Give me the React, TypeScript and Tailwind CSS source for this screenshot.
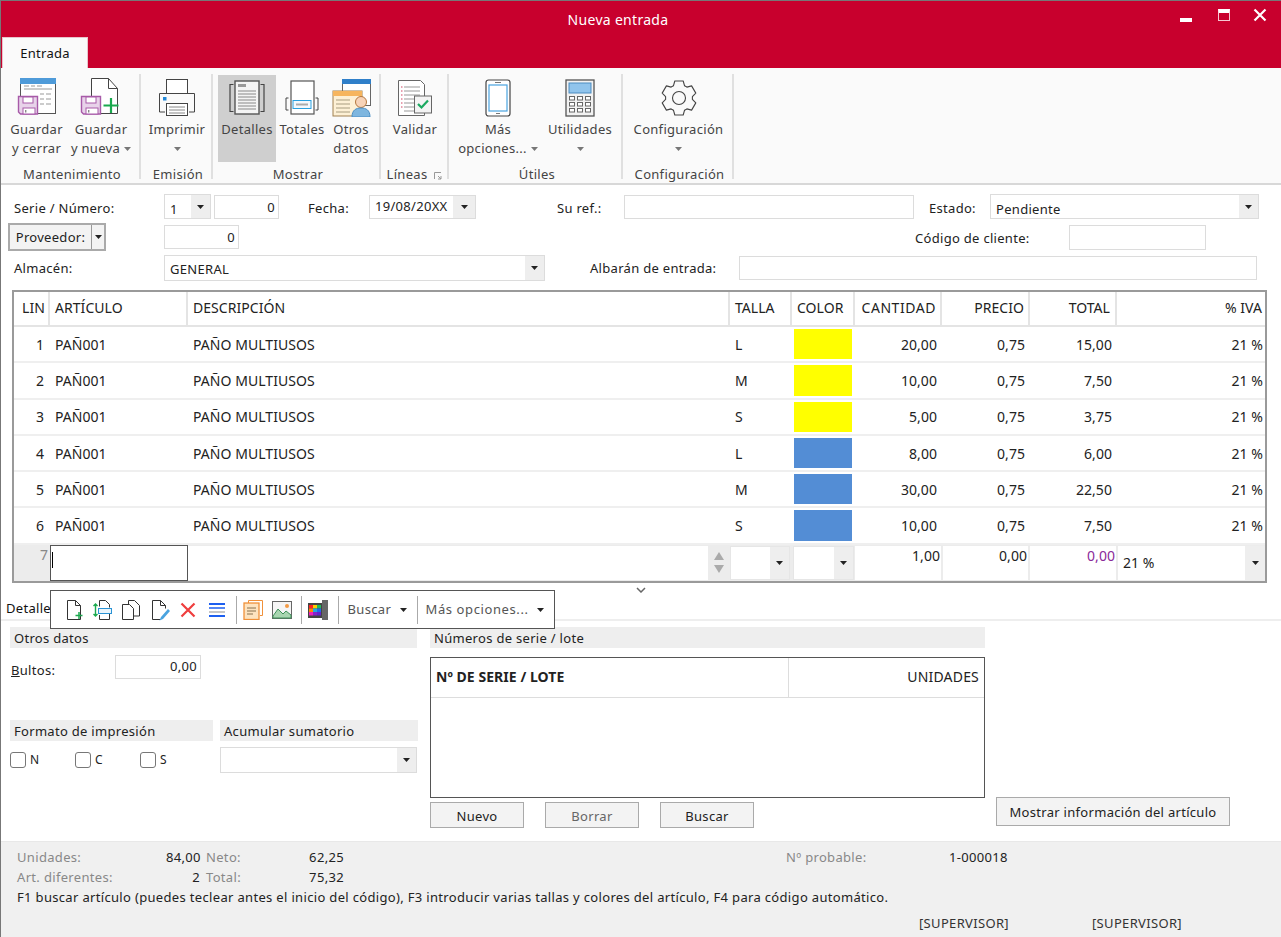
import React from "react";

const Caret = ({ className = "" }: { className?: string }) => (
  <svg width="7" height="4" viewBox="0 0 7 4" className={className}><path d="M0 0h7L3.5 4z" fill="currentColor" /></svg>
);

const Guardar = ({ x = 0 }: { x?: number }) => (
  <g transform={`translate(${x} 0)`}>
    <path d="M1.500 19.500h19v17.500h-17l-2-2z" fill="#e8d3ea" stroke="#a75aa8" strokeWidth="1.400" />
    <rect x="6" y="20" width="10" height="6" fill="#fff" stroke="#a75aa8" />
    <rect x="6" y="31" width="12" height="6" fill="#fff" stroke="#a75aa8" />
    <rect x="8" y="33" width="1.400" height="2.500" fill="#888" />
  </g>
);

const IconGuardarCerrar = () => (
  <svg width="42" height="42" viewBox="0 0 42 42">
    <rect x="4.500" y="1.500" width="35" height="35" fill="#fff" stroke="#555" />
    <rect x="4" y="1" width="36" height="6" fill="#4f9bd9" />
    <path d="M8 9h5M15 9h4M21 9h5M8 12h28M24 17h4M30 17h5M24 22h4M30 22h5M24 27h4M30 27h5" stroke="#999" strokeWidth="1" />
    <Guardar x={1} />
  </svg>
);
const IconGuardarNueva = () => (
  <svg width="42" height="42" viewBox="0 0 42 42">
    <path d="M11.500 1.500h17l9 10v25h-26z" fill="#fff" stroke="#444" />
    <path d="M28.500 1.500v10h9" fill="none" stroke="#444" />
    <Guardar x={0} />
    <path d="M31 21v15M23.500 28.500h15" stroke="#1aa94e" strokeWidth="2.200" />
  </svg>
);
const IconPrint = () => (
  <svg width="40" height="40" viewBox="0 0 40 40">
    <rect x="9.500" y="1.500" width="21" height="14" fill="#fff" stroke="#444" />
    <path d="M8 34H2.500V15.500h35V34H32" fill="#fafafa" stroke="#444" />
    <rect x="6" y="19" width="3.500" height="3.500" fill="#2288d8" />
    <rect x="9.500" y="25.500" width="21" height="12" fill="#fff" stroke="#444" />
    <path d="M12 29h16M12 32h16M12 35h16" stroke="#888" />
  </svg>
);
const IconDetalles = () => (
  <svg width="38" height="36" viewBox="0 0 38 36">
    <path d="M5.500 4.500H2v27h3.500M32.500 4.500H36v27h-3.500" fill="none" stroke="#444" strokeWidth="1.200" />
    <rect x="7" y="1" width="24" height="33" fill="#f4f4f4" stroke="#555" strokeWidth="1.400" />
    <rect x="10" y="4" width="8" height="3" fill="#999" />
    <path d="M10 11h18M10 14h18M10 17h18M10 20h18M10 23h18M10 26h18M10 29h18" stroke="#888" />
  </svg>
);
const IconTotales = () => (
  <svg width="34" height="36" viewBox="0 0 34 36">
    <rect x="6" y="1" width="23" height="33" fill="#fff" stroke="#555" strokeWidth="1.200" />
    <path d="M3.500 18H1v12h2.500M30.500 18H33v12h-2.500" fill="none" stroke="#444" />
    <rect x="8" y="20.500" width="18" height="8" fill="#f2f8fd" stroke="#28a0e0" />
    <path d="M11 24.500h12" stroke="#aaa" strokeWidth="2" />
  </svg>
);
const IconOtros = () => (
  <svg width="39" height="38" viewBox="0 0 39 38">
    <rect x="10.500" y="0.500" width="28" height="26" fill="#fff" stroke="#666" />
    <rect x="10" y="0" width="29" height="5" fill="#2f7fc9" />
    <rect x="1" y="12" width="29" height="25" fill="#fdf0d5" stroke="#a08050" />
    <rect x="1" y="12" width="29" height="5" fill="#f6b55e" />
    <path d="M4 21h14M4 25h14M4 29h14M4 33h14" stroke="#a89d80" />
    <circle cx="29" cy="23" r="5.500" fill="#f7d3b8" stroke="#b5763c" />
    <path d="M20 38c0-7 4-9 9-9s9 2 9 9z" fill="#7eb6df" stroke="#4d8fc4" />
  </svg>
);
const IconValidar = () => (
  <svg width="36" height="38" viewBox="0 0 36 38">
    <path d="M1.500 1.500h22l4 4v31h-26z" fill="#fff" stroke="#666" />
    <path d="M7 8h16M7 12h16M7 16h16M7 20h10M7 24h10M7 28h10M7 32h10" stroke="#999" />
    <path d="M4 8h1.500M4 12h1.500M4 16h1.500M4 20h1.500M4 24h1.500M4 28h1.500" stroke="#d04060" />
    <rect x="17.500" y="17" width="17" height="17" fill="#f4f4f4" stroke="#666" />
    <path d="M21 25l3.500 3.500 6.500-7" fill="none" stroke="#1aa960" strokeWidth="2.200" />
  </svg>
);
const IconTablet = () => (
  <svg width="26" height="38" viewBox="0 0 26 38">
    <rect x="1" y="1" width="24" height="36" rx="2.500" fill="#fff" stroke="#444" strokeWidth="1.200" />
    <rect x="4" y="6" width="18" height="26" fill="#fff" stroke="#4aa3df" strokeWidth="1.200" />
    <path d="M10 3.500h6M11 34.500h4" stroke="#777" />
  </svg>
);
const IconCalc = () => (
  <svg width="30" height="38" viewBox="0 0 30 38">
    <rect x="1" y="1" width="28" height="36" fill="#f2f2f2" stroke="#555" strokeWidth="1.300" />
    <rect x="4" y="4" width="22" height="10" fill="#90c4ec" stroke="#4b8bc0" />
    {[18, 24, 30].map((y) =>
      [4.5, 12.5, 20.5].map((x) => <rect key={`${x}-${y}`} x={x} y={y - 0.5} width="5" height="3.500" fill="#fff" stroke="#666" />)
    )}
  </svg>
);

const gearPath = (() => {
  const pts: string[] = [];
  const R = 17.5, r = 13.5, c = 18;
  for (let i = 0; i < 6; i++) {
    const a = (i * Math.PI) / 3 - Math.PI / 2;
    const seq: [number, number][] = [[r, a - 0.42], [R, a - 0.24], [R, a + 0.24], [r, a + 0.42]];
    seq.forEach(([rad, ang]) => pts.push(`${(c + rad * Math.cos(ang)).toFixed(1)} ${(c + rad * Math.sin(ang)).toFixed(1)}`));
  }
  return "M" + pts.join("L") + "Z";
})();
const IconGear = () => (
  <svg width="36" height="36" viewBox="0 0 36 36" fill="none" stroke="#444" strokeWidth="1.100" strokeLinejoin="round">
    <path d={gearPath} />
    <circle cx="18" cy="18" r="6.500" />
  </svg>
);

const RibbonBtn = ({ icon, l1, l2, caret, w, active }: any) => (
  <div className={`flex flex-col items-center h-[87px] pt-[1px] mt-[1px] shrink-0 ${w} ${active ? "bg-[#cfcfcf]" : ""}`}>
    <div className="h-[44px] flex items-center justify-center">{icon}</div>
    <div className="h-[19px] leading-[19px] whitespace-nowrap">{l1}</div>
    <div className="h-[19px] leading-[19px] whitespace-nowrap flex items-center gap-[4px]">
      {l2}
      {caret && <Caret className="text-[#777]" />}
    </div>
  </div>
);

const Group = ({ label, w, children, launcher, pl = "" }: any) => (
  <div className={`flex flex-col border-r-2 border-[#e0e0e0] h-[105px] shrink-0 ${w}`}>
    <div className={`flex h-[89px] shrink-0 ${pl}`}>{children}</div>
    <div className={`relative text-center leading-[19px] h-[19px] mt-[2px] shrink-0 whitespace-nowrap ${launcher ? "pr-[14px]" : "pl-[4px]"}`}>
      {label}
      {launcher && (
        <svg width="8" height="8" viewBox="0 0 8 8" className="absolute right-[5px] top-[7px]">
          <path d="M.5 7V.5H7M4 4l3 3M7 4v3H4" fill="none" stroke="#999" />
        </svg>
      )}
    </div>
  </div>
);

const Field = ({ w, h = "h-[24px]", ml = "", v = "", lh = "leading-[22px]" }: any) => (
  <div className={`shrink-0 border border-[#dcdcdc] bg-white text-right pr-[3px] ${lh} ${w} ${h} ${ml}`}>{v}</div>
);
const Select = ({ w, h = "h-[25px]", ml = "", v = "", arrow = "w-[19px]", lh = "leading-[28px]" }: any) => (
  <div className={`shrink-0 flex border border-[#dcdcdc] bg-white ${w} ${h} ${ml}`}>
    <div className={`flex-1 pl-[5px] truncate ${lh}`}>{v}</div>
    <div className={`flex items-center justify-center bg-[#eeeeee] text-[#222] ${arrow}`}><Caret /></div>
  </div>
);

const cols = ["w-[36px]", "w-[138px]", "w-[542px]", "w-[62px]", "w-[63px]", "w-[87px]", "w-[88px]", "w-[87px]", "flex-1"];
const rows = [
  ["1", "L", "#ffff00", "20,00", "15,00"],
  ["2", "M", "#ffff00", "10,00", "7,50"],
  ["3", "S", "#ffff00", "5,00", "3,75"],
  ["4", "L", "#538dd5", "8,00", "6,00"],
  ["5", "M", "#538dd5", "30,00", "22,50"],
  ["6", "S", "#538dd5", "10,00", "7,50"],
];

const Head = ({ c, t, px = "px-[5px]", right, wide }: any) => (
  <div className={`${c} shrink-0 h-full border-r-2 border-[#e4e4e4] last:border-r-0 ${px} pb-[2px] flex items-center whitespace-nowrap ${right ? "justify-end" : ""} ${wide ? "tracking-[0.55px]" : ""}`}>{t}</div>
);

const Tool = ({ children }: any) => <div className="w-[28.5px] h-[26px] flex items-center justify-center shrink-0">{children}</div>;
const Doc = ({ children }: any) => (
  <svg width="20" height="22" viewBox="0 0 20 22" fill="none">
    {children}
  </svg>
);
const Sep = () => <div className="w-[1px] h-[28px] bg-[#aaaaaa] ml-[5px] mr-[2px] shrink-0" />;

const Section = ({ t, w, ml = "", h = "h-[21px]" }: any) => (
  <div className={`bg-[#eeeeee] pl-[4px] leading-[22px] shrink-0 ${w} ${h} ${ml}`}>{t}</div>
);
const Check = ({ t, w }: any) => (
  <div className={`flex items-center gap-[4px] shrink-0 ${w}`}>
    <span className="w-[16px] h-[16px] rounded-[3px] border border-[#777] bg-white" />
    <span className="text-[12px]">{t}</span>
  </div>
);
const Btn = ({ t, w, ml = "", muted }: any) => (
  <div className={`h-[26px] border border-[#aaaaaa] bg-[#f3f3f3] text-center leading-[26px] shrink-0 ${w} ${ml} ${muted ? "text-[#666]" : ""}`}>{t}</div>
);

export default function App() {
  return (
    <div className="relative w-[1281px] h-[937px] bg-white text-[#222] text-[13px] tracking-[0.3px] overflow-hidden border-l border-[#777] font-['Noto_Sans','Open_Sans',sans-serif]">
      {/* title */}
      <div className="h-[68px] bg-[#c8002d] border-t border-[#777] relative flex flex-col">
        <div className="h-[38px] flex items-center justify-center text-white text-[14px] pr-[46px]">Nueva entrada</div>
        <div className="absolute right-[1px] top-[3px] flex items-start text-white">
          <div className="w-[12px] h-[4px] bg-white mt-[14px] mr-[26px]" />
          <div className="w-[12px] h-[12px] border border-[#f6c7d2] border-t-[4px] border-t-white mt-[5px] mr-[23px]" />
          <svg width="14" height="14" viewBox="0 0 14 14" className="mt-[4px] mr-[13px]"><path d="M1.500 1.500l11 11M12.500 1.500l-11 11" stroke="#fff" strokeWidth="2.200" /></svg>
        </div>
        <div className="mt-auto ml-[1px] w-[86px] h-[31px] bg-[#fafafa] border border-[#e8c4cc] border-b-0 text-center leading-[30px] text-[#111]">Entrada</div>
      </div>

      {/* ribbon */}
      <div className="h-[117px] bg-[#fafafa] border-b-2 border-[#d8d8d8] flex pt-[6px] text-[#444]">
        <Group label="Mantenimiento" w="w-[140px]" pl="pl-[3px]">
          <RibbonBtn w="w-[65px]" icon={<IconGuardarCerrar />} l1="Guardar" l2="y cerrar" />
          <RibbonBtn w="w-[64px]" icon={<IconGuardarNueva />} l1="Guardar" l2="y nueva" caret />
        </Group>
        <Group label="Emisión" w="w-[72px]" pl="pl-[4px]">
          <RibbonBtn w="w-[64px]" icon={<IconPrint />} l1="Imprimir" l2="" caret />
        </Group>
        <Group label="Mostrar" w="w-[168px]" pl="pl-[5px]">
          <RibbonBtn w="w-[58px]" active icon={<IconDetalles />} l1="Detalles" l2="" />
          <RibbonBtn w="w-[52px]" icon={<IconTotales />} l1="Totales" l2="" />
          <RibbonBtn w="w-[46px]" icon={<IconOtros />} l1="Otros" l2="datos" />
        </Group>
        <Group label="Líneas" w="w-[68px]" launcher pl="pl-[4px]">
          <RibbonBtn w="w-[60px]" icon={<IconValidar />} l1="Validar" l2="" />
        </Group>
        <Group label="Útiles" w="w-[174px]" pl="pl-[9px]">
          <RibbonBtn w="w-[80px]" icon={<IconTablet />} l1="Más" l2="opciones..." caret />
          <RibbonBtn w="w-[84px]" icon={<IconCalc />} l1="Utilidades" l2="" caret />
        </Group>
        <Group label="Configuración" w="w-[111px]">
          <RibbonBtn w="w-[111px]" icon={<IconGear />} l1="Configuración" l2="" caret />
        </Group>
      </div>

      {/* form */}
      <div className="pt-[8px] pl-[7px]">
        <div className="flex items-center h-[27px]">
          <div className="w-[156px] pl-[6px] pt-[5px] shrink-0">Serie / Número:</div>
          <Select w="w-[47px]" v="1" />
          <Field w="w-[65px]" ml="ml-[3px]" v="0" />
          <div className="ml-[29px] pt-[5px] w-[61px] shrink-0">Fecha:</div>
          <Select w="w-[107px]" h="h-[24px]" v="19/08/20XX" arrow="w-[22px]" lh="leading-[20px]" />
          <div className="ml-[81px] pt-[5px] w-[67px] shrink-0">Su ref.:</div>
          <Field w="w-[290px]" />
          <div className="ml-[15px] pt-[5px] w-[61px] shrink-0">Estado:</div>
          <Select w="w-[269px]" v="Pendiente" />
        </div>
        <div className="flex items-center h-[33px]">
          <div className="flex w-[98px] h-[28px] border-2 border-[#aaaaaa] bg-[#f3f3f3] shrink-0">
            <div className="flex-1 text-center leading-[25px] border-r border-[#999]">Proveedor:</div>
            <div className="w-[12px] flex items-center justify-center"><Caret /></div>
          </div>
          <Field w="w-[75px]" ml="ml-[58px]" h="h-[24px] mt-[1px]" v="0" />
          <div className="ml-[676px] pt-[5px] w-[154px] shrink-0">Código de cliente:</div>
          <Field w="w-[137px]" h="h-[25px] mt-[1px]" />
        </div>
        <div className="flex items-center h-[30px]">
          <div className="w-[156px] pl-[6px] pt-[2px] shrink-0">Almacén:</div>
          <Select w="w-[381px]" h="h-[26px]" v="GENERAL" lh="leading-[26px]" />
          <div className="ml-[45px] pt-[2px] w-[149px] shrink-0">Albarán de entrada:</div>
          <Field w="w-[518px]" />
        </div>
      </div>

      {/* grid */}
      <div className="mt-[7px] ml-[11px] w-[1255px] h-[293px] border-2 border-[#9a9a9a] bg-white flex flex-col text-[14px] tracking-[0.05px]">
        <div className="h-[35px] flex items-center border-b-2 border-[#e4e4e4] shrink-0">
          <Head c={cols[0]} t="LIN" px="pl-[8px]" />
          <Head c={cols[1]} t="ARTÍCULO" />
          <Head c={cols[2]} t="DESCRIPCIÓN" />
          <Head c={cols[3]} t="TALLA" />
          <Head c={cols[4]} t="COLOR" />
          <Head c={cols[5]} t="CANTIDAD" px="pr-[4px]" right wide />
          <Head c={cols[6]} t="PRECIO" px="pr-[4px]" right />
          <Head c={cols[7]} t="TOTAL" right />
          <Head c={cols[8]} t="% IVA" px="pr-[3px]" right />
        </div>
        {rows.map((r) => (
          <div key={r[0]} className="h-[36.3px] flex items-center border-b-2 border-[#efefef] shrink-0">
            <div className={`${cols[0]} shrink-0 text-right pr-[6px]`}>{r[0]}</div>
            <div className={`${cols[1]} shrink-0 pl-[5px]`}>PAÑ001</div>
            <div className={`${cols[2]} shrink-0 pl-[5px]`}>PAÑO MULTIUSOS</div>
            <div className={`${cols[3]} shrink-0 pl-[5px]`}>{r[1]}</div>
            <div className={`${cols[4]} shrink-0 h-full pl-[2px] pt-[2px] pb-[2px]`}>
              <div className="w-[58px] h-full" style={{ background: r[2] }} />
            </div>
            <div className={`${cols[5]} shrink-0 text-right pr-[5px]`}>{r[3]}</div>
            <div className={`${cols[6]} shrink-0 text-right pr-[5px]`}>0,75</div>
            <div className={`${cols[7]} shrink-0 text-right pr-[5px]`}>{r[4]}</div>
            <div className={`${cols[8]} shrink-0 text-right pr-[2px]`}>21 %</div>
          </div>
        ))}
        <div className="flex-1 flex bg-[#ececec] min-h-0">
          <div className={`${cols[0]} shrink-0 text-right pr-[2px] text-[#888] leading-[20px]`}>7</div>
          <div className="w-[138px] shrink-0 bg-white border border-[#555] pl-[1px]"><div className="w-[1px] h-[16px] bg-black mt-[6px]" /></div>
          <div className="w-[520px] shrink-0 bg-white my-[1px]" />
          <div className="w-[22px] shrink-0 flex flex-col items-center justify-center gap-[5px] text-[#aaaaaa]">
            <svg width="10" height="8" viewBox="0 0 10 8"><path d="M0 8h10L5 0z" fill="currentColor" /></svg>
            <svg width="10" height="8" viewBox="0 0 10 8"><path d="M0 0h10L5 8z" fill="currentColor" /></svg>
          </div>
          <Select w="w-[60px]" h="h-[34px] mt-[1px] border-[#e6e6e6]" arrow="w-[19px]" />
          <Select w="w-[61px]" ml="ml-[3px]" h="h-[34px] mt-[1px] border-[#e6e6e6]" arrow="w-[19px]" />
          <div className="w-[86px] ml-[1px] h-[34px] mt-[1px] bg-white text-right pr-[1px] leading-[20px]">1,00</div>
          <div className="w-[85px] ml-[2px] h-[34px] mt-[1px] bg-white text-right pr-[1px] leading-[20px]">0,00</div>
          <div className="w-[86px] ml-[2px] h-[34px] mt-[1px] bg-white text-right pr-[1px] leading-[20px] text-[#8b2a9a]">0,00</div>
          <div className="ml-[2px] flex-1 h-[34px] mt-[1px] bg-white flex">
            <div className="flex-1 pl-[5px] leading-[33px]">21 %</div>
            <div className="w-[20px] bg-[#eeeeee] flex items-center justify-center"><Caret /></div>
          </div>
        </div>
      </div>

      {/* splitter */}
      <div className="h-[13px] flex items-center justify-center">
        <svg width="10" height="6" viewBox="0 0 10 6"><path d="M1 1l4 4 4-4" fill="none" stroke="#666" strokeWidth="1.500" /></svg>
      </div>

      {/* tab strip */}
      <div className="h-[25px] border-b-2 border-[#eeeeee] relative">
        <div className="w-[52px] h-[23px] pl-[5px] leading-[24px] bg-white text-[#111] whitespace-nowrap">Detalles</div>
        <div className="absolute left-[49px] top-[-6px] w-[505px] h-[39px] border border-[#555] bg-white flex items-center pl-[9px] text-[#555] z-10">
          <Tool><Doc><path d="M3.500 1.500h8l5 5v14h-13z" stroke="#333" fill="#fff" /><path d="M11.500 1.500v5h5" stroke="#333" /><path d="M15 13v7M11.500 16.500h7" stroke="#1aa94e" strokeWidth="1.500" /></Doc></Tool>
          <Tool><Doc><path d="M6.500 1.500h6l4 4v3M6.500 1.500v6M6.500 16v4.500h10V15" stroke="#333" /><rect x="5.500" y="9.500" width="13" height="5" stroke="#2a93d5" fill="#eaf5fc" /><path d="M2.500 5v12M.5 7l2-2 2 2M.5 15l2 2 2-2" stroke="#1aa94e" strokeWidth="1.400" /></Doc></Tool>
          <Tool><Doc><path d="M7.500 5V1.500h6l5 5V17H13" stroke="#333" /><path d="M1.500 5.500h7l4 4v11h-11z" stroke="#333" fill="#fff" /></Doc></Tool>
          <Tool><Doc><path d="M2.500 1.500h8l5 5v3M2.500 1.500v19h8" stroke="#333" /><path d="M10.500 1.500v5h5" stroke="#333" /><path d="M18 10l-7 8-1.500 3.500 3.500-1.500 7-8z" fill="#4aa3df" /></Doc></Tool>
          <Tool><svg width="16" height="16" viewBox="0 0 16 16"><path d="M1.500 1.500l13 13M14.500 1.500l-13 13" stroke="#ef3e3e" strokeWidth="2.200" /></svg></Tool>
          <Tool><svg width="16" height="16" viewBox="0 0 16 16"><path d="M0 2h16M0 14h16" stroke="#1d5ff0" strokeWidth="2" /><path d="M0 6h16" stroke="#1d5ff0" strokeWidth="1.500" /><path d="M0 10h16" stroke="#b5b5b5" strokeWidth="1.500" /></svg></Tool>
          <Sep />
          <Tool><svg width="20" height="20" viewBox="0 0 20 20"><path d="M5.500 3V.5h14v15H17" stroke="#f0913a" fill="#fff" /><rect x="1" y="3" width="15" height="16.500" fill="#fde3bf" stroke="#f0913a" strokeWidth="1.300" /><path d="M4 8h9M4 11h9M4 14h6" stroke="#86714f" /></svg></Tool>
          <Tool><svg width="20" height="18" viewBox="0 0 20 18"><rect x=".5" y=".5" width="19" height="17" fill="#f5f5f5" stroke="#666" /><path d="M1 15l5-7 5 5 3-3 5 4v3H1z" fill="#a8d5b0" stroke="#3f8f5a" /><circle cx="15" cy="5" r="2" fill="#f39a45" /></svg></Tool>
          <Sep />
          <Tool><svg width="20" height="20" viewBox="0 0 20 20"><rect x="0" y="3" width="20" height="15" fill="#444" /><rect x="14" y="0" width="6" height="20" fill="#666" /><rect x="1" y="5" width="4" height="3.500" fill="#f22" /><rect x="5" y="5" width="4" height="3.500" fill="#fc0" /><rect x="9" y="5" width="4" height="3.500" fill="#2b5" /><rect x="1" y="8.500" width="4" height="3.500" fill="#f80" /><rect x="5" y="8.500" width="4" height="3.500" fill="#2ad" /><rect x="9" y="8.500" width="4" height="3.500" fill="#26e" /><rect x="1" y="12" width="4" height="3.500" fill="#e2b" /><rect x="5" y="12" width="4" height="3.500" fill="#82c" /><rect x="9" y="12" width="4" height="3.500" fill="#62c" /></svg></Tool>
          <Sep />
          <div className="w-[71px] shrink-0 pl-[7px] flex items-center gap-[9px] whitespace-nowrap tracking-[0.35px]">Buscar <Caret className="text-[#222]" /></div>
          <Sep />
          <div className="pl-[6px] flex items-center gap-[8px] whitespace-nowrap tracking-[0.6px]">Más opciones... <Caret className="text-[#222]" /></div>
        </div>
      </div>

      {/* lower */}
      <div className="h-[220px] flex pl-[9px] pt-[6px]">
        <div className="w-[407px] shrink-0 flex flex-col">
          <Section t="Otros datos" w="w-[407px]" />
          <div className="flex items-center h-[24px] mt-[7px]">
            <div className="w-[105px] pl-[1px] pt-[7px] shrink-0"><span className="underline">B</span>ultos:</div>
            <Field w="w-[86px]" h="h-[24px]" v="0,00" lh="leading-[20px]" />
          </div>
          <div className="flex mt-[41px]">
            <Section t="Formato de impresión" w="w-[203px]" />
            <Section t="Acumular sumatorio" w="w-[198px]" ml="ml-[7px]" />
          </div>
          <div className="flex mt-[6px] items-start">
            <div className="flex w-[210px] pt-[4px]">
              <Check t="N" w="w-[65px]" />
              <Check t="C" w="w-[65px]" />
              <Check t="S" w="w-[65px]" />
            </div>
            <Select w="w-[197px]" h="h-[26px]" />
          </div>
        </div>
        <div className="w-[556px] ml-[13px] shrink-0 flex flex-col">
          <Section t="Números de serie / lote" w="w-[555px]" />
          <div className="mt-[9px] w-[555px] h-[141px] border border-[#555] bg-white flex flex-col text-[14px] tracking-[0.05px]">
            <div className="h-[40px] flex border-b border-[#ddd] items-center">
              <div className="w-[358px] pl-[5px] pb-[2px] font-bold border-r border-[#ddd] h-full flex items-center text-[#222]">Nº DE SERIE / LOTE</div>
              <div className="flex-1 text-right pr-[5px] pb-[2px] tracking-[0.2px]">UNIDADES</div>
            </div>
          </div>
          <div className="flex mt-[4px]">
            <Btn t="Nuevo" w="w-[94px]" />
            <Btn t="Borrar" w="w-[94px]" ml="ml-[21px]" muted />
            <Btn t="Buscar" w="w-[94px]" ml="ml-[21px]" />
          </div>
        </div>
        <div className="ml-[10px] pt-[170px] shrink-0">
          <div className="w-[234px] h-[29px] border border-[#aaaaaa] bg-[#f3f3f3] text-center leading-[29px]">Mostrar información del artículo</div>
        </div>
      </div>

      {/* footer */}
      <div className="h-[96px] bg-[#f0f0f0] border-t border-[#e8e8e8] pl-[16px] pt-[5px] leading-[20px] tracking-[0.33px]">
        <div className="flex h-[20px]">
          <div className="w-[149px] text-[#888]">Unidades:</div>
          <div className="w-[34px] text-right whitespace-nowrap">84,00</div>
          <div className="w-[104px] pl-[6px] text-[#888]">Neto:</div>
          <div className="w-[40px] text-right">62,25</div>
          <div className="ml-[442px] w-[163px] text-[#888]">Nº probable:</div>
          <div>1-000018</div>
        </div>
        <div className="flex h-[20px]">
          <div className="w-[149px] text-[#888]">Art. diferentes:</div>
          <div className="w-[34px] text-right">2</div>
          <div className="w-[104px] pl-[6px] text-[#888]">Total:</div>
          <div className="w-[40px] text-right">75,32</div>
        </div>
        <div className="h-[20px] whitespace-nowrap">F1 buscar artículo (puedes teclear antes el inicio del código), F3 introducir varias tallas y colores del artículo, F4 para código automático.</div>
        <div className="flex h-[20px] mt-[6px] text-[#333]">
          <div className="ml-[902px] w-[173px]">[SUPERVISOR]</div>
          <div>[SUPERVISOR]</div>
        </div>
      </div>
    </div>
  );
}
